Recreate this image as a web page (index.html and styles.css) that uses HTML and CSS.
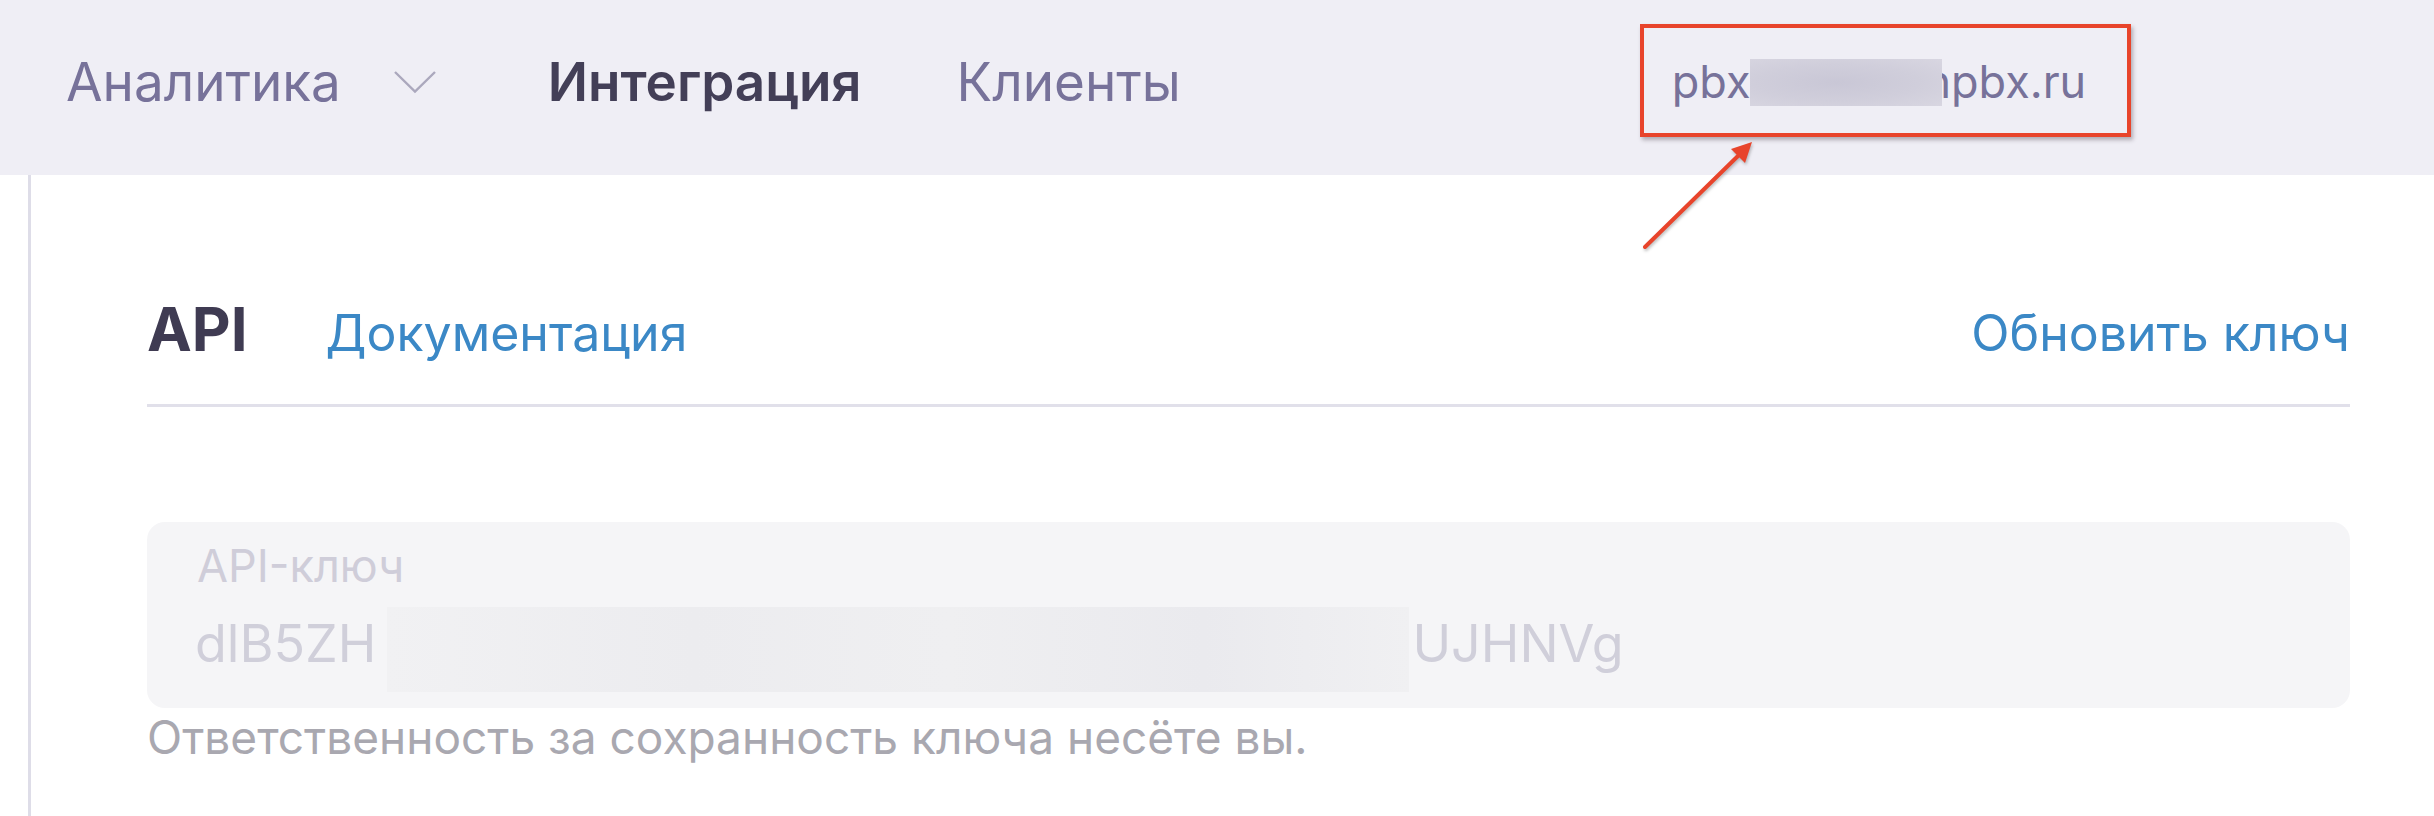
FILE: index.html
```html
<!DOCTYPE html>
<html lang="ru">
<head>
<meta charset="utf-8">
<title>Интеграция</title>
<link rel="stylesheet" href="styles.css">
</head>
<body>
<header class="topbar">
  <nav class="nav">
    <a class="nav-item nav-dropdown">Аналитика
      <svg class="chevron" width="44" height="24" viewBox="0 0 44 24"><polyline points="2,2 22,21.5 42,2" fill="none" stroke="#aba8bd" stroke-width="2.4"/></svg>
    </a>
    <a class="nav-item active">Интеграция</a>
    <a class="nav-item">Клиенты</a>
  </nav>
  <div class="domain">
    <span>pbx</span><span class="redact-domain"></span><span>npbx.ru</span>
    <span class="callout"></span>
  </div>
  <svg class="arrow" width="140" height="130" viewBox="0 0 140 130">
    <line x1="15" y1="117" x2="110" y2="24" stroke="#e8442b" stroke-width="4" stroke-linecap="round"/>
    <polygon points="122,12 101,19 115,33" fill="#e8442b"/>
  </svg>
</header>
<div class="page">
  <div class="rail"></div>
  <main class="content">
    <div class="section-head">
      <h1 class="title">API</h1>
      <a class="link doc">Документация</a>
      <a class="link refresh">Обновить ключ</a>
    </div>
    <div class="field">
      <div class="field-label">API-ключ</div>
      <div class="field-value"><span>dlB5ZH</span><span class="redact-key"></span><span>UJHNVg</span></div>
    </div>
    <p class="hint">Ответственность за сохранность ключа несёте вы.</p>
  </main>
</div>
</body>
</html>
```
FILE: styles.css
```css
html, body {
  margin: 0;
  padding: 0;
  background: #ffffff;
  font-family: "Inter", "Noto Sans", sans-serif;
}
body {
  width: 2434px;
  height: 816px;
  overflow: hidden;
}
.topbar {
  position: relative;
  box-sizing: border-box;
  height: 175px;
  background: #efeef5;
  display: flex;
  align-items: flex-start;
  padding-left: 66px;
}
.nav {
  display: flex;
  align-items: center;
  gap: 95px;
  margin-top: 50px;
}
.nav-item {
  font-size: 53px;
  line-height: 64px;
  color: #77729a;
  text-decoration: none;
  white-space: nowrap;
}
.nav-dropdown {
  display: flex;
  align-items: center;
  gap: 52px;
  margin-right: 16px;
}
.chevron {
  display: block;
  margin-top: 0;
}
.nav-item.active {
  color: #433f57;
  font-weight: 600;
}
.domain {
  position: relative;
  display: flex;
  align-items: center;
  margin-top: 55px;
  margin-left: 491px;
  font-size: 45px;
  line-height: 54px;
  color: #77729a;
  white-space: nowrap;
}
.redact-domain {
  position: relative;
  z-index: 1;
  display: block;
  width: 192px;
  height: 47px;
  margin-right: -18px;
  background: radial-gradient(ellipse at 45% 50%, #c9c7d6 0%, #d0cedb 55%, #d8d6e1 100%);
}
.callout {
  position: absolute;
  left: -32px;
  top: -31px;
  width: 491px;
  height: 113px;
  box-sizing: border-box;
  border: 4px solid #e8442b;
  box-shadow: 2px 3px 4px rgba(60, 50, 60, 0.35);
  z-index: 2;
}
.arrow {
  position: absolute;
  left: 1630px;
  top: 130px;
  z-index: 3;
  filter: drop-shadow(1px 2px 1.5px rgba(0, 0, 0, 0.25));
}
.page {
  display: flex;
  height: 641px;
}
.rail {
  width: 28px;
  flex: none;
  border-right: 3px solid #dedde8;
}
.content {
  flex: 1;
  padding: 118px 84px 0 116px;
}
.section-head {
  display: flex;
  align-items: baseline;
  padding-bottom: 39px;
  border-bottom: 3px solid #e1e0ea;
}
.title {
  margin: 0;
  font-size: 60px;
  line-height: 72px;
  font-weight: 700;
  color: #3f3b52;
}
.link {
  font-size: 50px;
  line-height: 60px;
  color: #3b88c6;
  text-decoration: none;
}
.doc {
  margin-left: 78px;
}
.refresh {
  margin-left: auto;
}
.field {
  margin-top: 115px;
  box-sizing: border-box;
  height: 186px;
  padding: 17px 48px 0 48px;
  background: #f5f5f7;
  border-radius: 18px;
}
.field-label {
  font-size: 45px;
  line-height: 54px;
  color: #cfcdd9;
  padding-left: 2px;
}
.field-value {
  display: flex;
  align-items: center;
  margin-top: 20px;
  font-size: 52px;
  line-height: 62px;
  color: #d0cfda;
  white-space: nowrap;
}
.redact-key {
  display: block;
  width: 1022px;
  height: 85px;
  margin: -6px 3px -17px 11px;
  background: linear-gradient(90deg, #f1f1f3 0%, #ececef 30%, #efeff1 55%, #eaeaee 80%, #f0f0f2 100%);
}
.hint {
  margin: 1px 0 0;
  font-size: 46px;
  line-height: 56px;
  color: #a9a8b0;
}
```
